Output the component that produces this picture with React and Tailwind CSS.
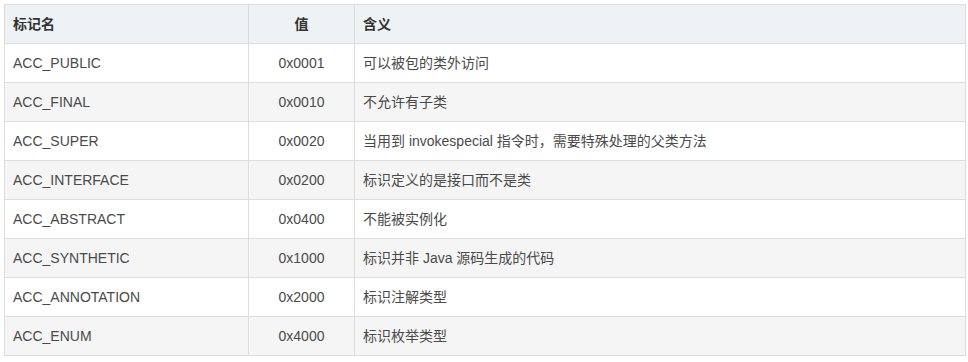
const rows = [
  ["ACC_PUBLIC", "0x0001", "可以被包的类外访问"],
  ["ACC_FINAL", "0x0010", "不允许有子类"],
  ["ACC_SUPER", "0x0020", "当用到 invokespecial 指令时，需要特殊处理的父类方法"],
  ["ACC_INTERFACE", "0x0200", "标识定义的是接口而不是类"],
  ["ACC_ABSTRACT", "0x0400", "不能被实例化"],
  ["ACC_SYNTHETIC", "0x1000", "标识并非 Java 源码生成的代码"],
  ["ACC_ANNOTATION", "0x2000", "标识注解类型"],
  ["ACC_ENUM", "0x4000", "标识枚举类型"],
];

export default function App() {
  return (
    <div
      className="w-[968px] h-[362px] bg-white pt-[4px] pl-[4px]"
      style={{ fontFamily: '"Liberation Sans", "Noto Sans CJK SC", sans-serif' }}
    >
      <table className="table-fixed border-collapse text-[14px] text-[#4a4a4a]">
        <colgroup>
          <col className="w-[244px]" />
          <col className="w-[106px]" />
          <col className="w-[611px]" />
        </colgroup>
        <thead>
          <tr className="bg-[#eff2f5] text-[#333]">
            <th className="h-[39px] border border-[#dddddd] px-2 text-left font-bold">标记名</th>
            <th className="h-[39px] border border-[#dddddd] px-2 text-center font-bold">值</th>
            <th className="h-[39px] border border-[#dddddd] px-2 text-left font-bold">含义</th>
          </tr>
        </thead>
        <tbody>
          {rows.map((r, i) => (
            <tr key={r[0]} className={i % 2 === 1 ? "bg-[#f5f5f5]" : "bg-white"}>
              <td className="h-[39px] border border-[#dddddd] px-2">{r[0]}</td>
              <td className="h-[39px] border border-[#dddddd] px-2 text-center">{r[1]}</td>
              <td className="h-[39px] border border-[#dddddd] px-2">{r[2]}</td>
            </tr>
          ))}
        </tbody>
      </table>
    </div>
  );
}
